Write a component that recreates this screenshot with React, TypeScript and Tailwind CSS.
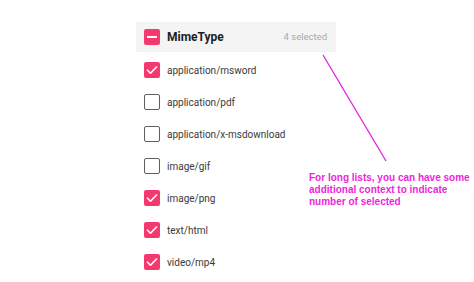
import React from 'react';

const items: { label: string; checked: boolean }[] = [
  { label: 'application/msword', checked: true },
  { label: 'application/pdf', checked: false },
  { label: 'application/x-msdownload', checked: false },
  { label: 'image/gif', checked: false },
  { label: 'image/png', checked: true },
  { label: 'text/html', checked: true },
  { label: 'video/mp4', checked: true },
];

const Check = ({ checked }: { checked: boolean }) =>
  checked ? (
    <span className="flex h-4 w-4 items-center justify-center rounded-[2px] bg-[#f5396f]">
      <svg viewBox="0 0 16 16" className="h-4 w-4">
        <path d="M3.5 8.2l3 3 6-6.2" fill="none" stroke="#fff" strokeWidth="1.6" strokeLinecap="round" strokeLinejoin="round" />
      </svg>
    </span>
  ) : (
    <span className="h-4 w-4 rounded-[2px] border-[1.5px] border-[#5f5f5f] bg-white" />
  );

export default function App() {
  return (
    <div className="relative h-[282px] w-[474px] overflow-hidden bg-white font-['Roboto',sans-serif]">
      <div className="pl-[136px] pt-[22px]">
        {/* header with indeterminate checkbox */}
        <div className="flex h-[30px] w-[200px] items-center bg-[#f4f4f5] pl-2 pr-[9px]">
          <span className="flex h-4 w-4 items-center justify-center rounded-[2px] bg-[#f5396f]">
            <span className="h-[2px] w-[10px] bg-white" />
          </span>
          <span className="ml-[7px] text-[12px] font-bold text-[#1d1d24]">MimeType</span>
          <span className="ml-auto text-[9.5px] text-[#a9a9ad]">4 selected</span>
        </div>

        <div className="mt-[2px] flex flex-col">
          {items.map((it) => (
            <div key={it.label} className="flex h-8 items-center pl-2">
              <Check checked={it.checked} />
              <span className="ml-[7px] text-[10px] text-[#3a3a3a]">{it.label}</span>
            </div>
          ))}
        </div>
      </div>

      {/* annotation */}
      <svg className="absolute left-0 top-0" width="474" height="282">
        <line x1="323" y1="55" x2="386" y2="161" stroke="#e41fe0" strokeWidth="1.3" />
      </svg>
      <div className="absolute left-[309px] top-[172px] w-[162px] font-['Liberation_Sans',Arial,sans-serif] text-[10px] font-bold leading-[12px] text-[#ee1fdc]">
        For long lists, you can have some additional context to indicate number of selected
      </div>
    </div>
  );
}
